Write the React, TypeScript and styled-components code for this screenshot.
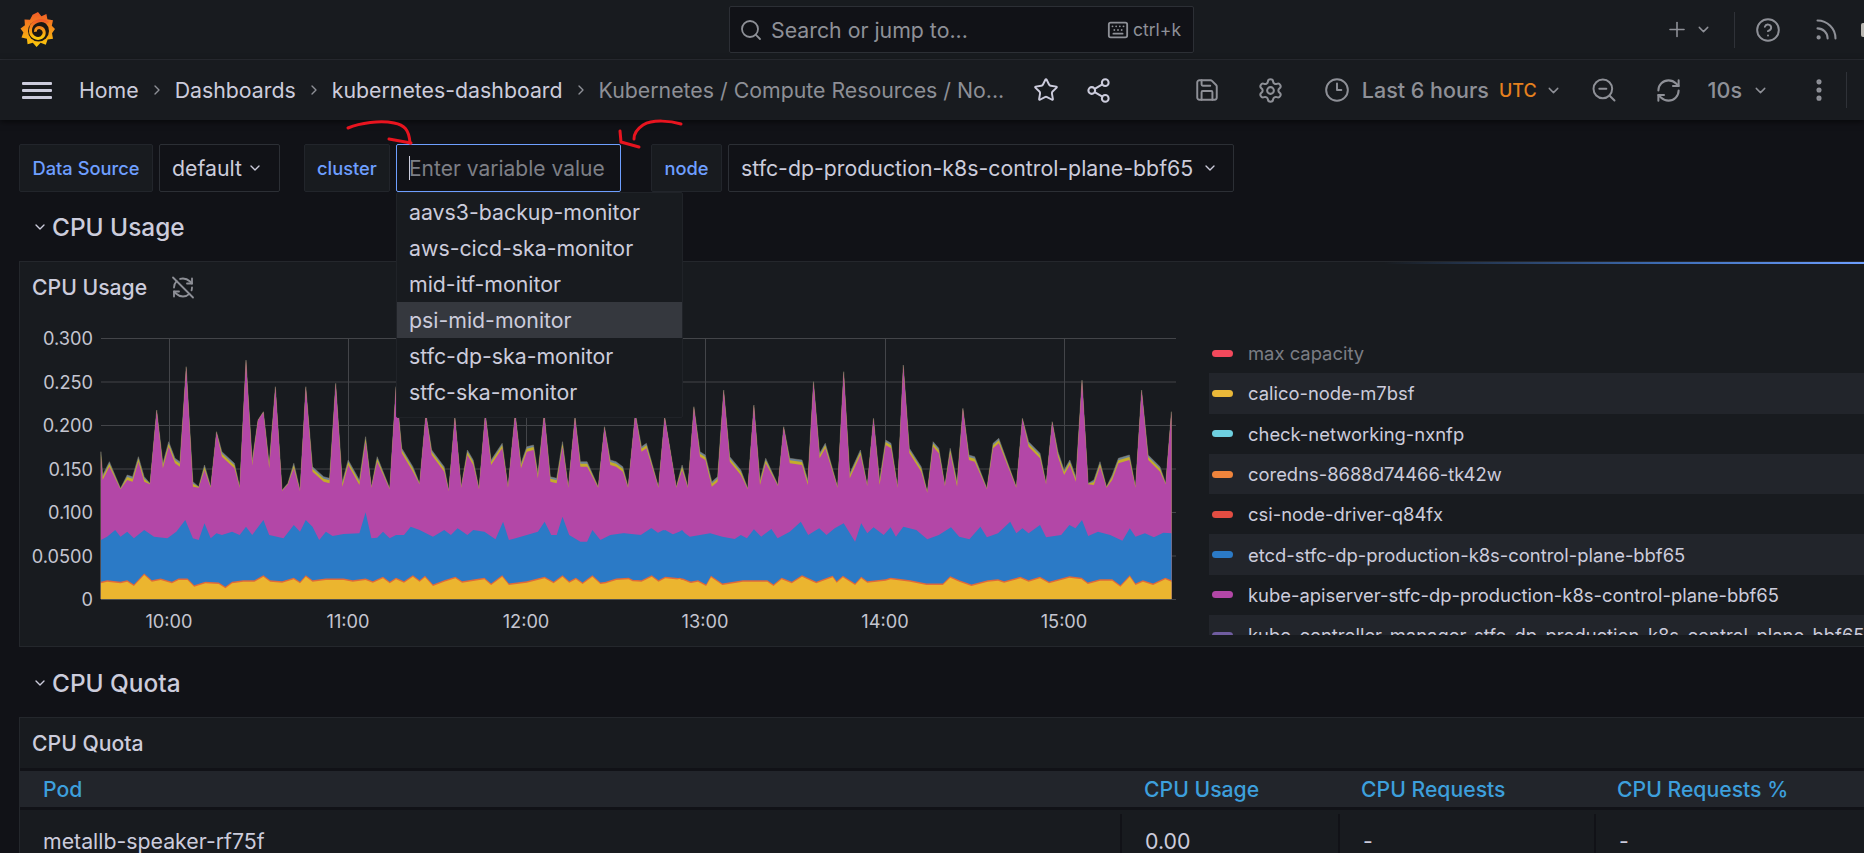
import React from 'react';
import styled, { createGlobalStyle } from 'styled-components';
import {
  ChevronDown,
  ChevronRight,
  CircleHelp,
  Clock3,
  EllipsisVertical,
  Keyboard,
  Plus,
  RefreshCw,
  RefreshCwOff,
  Rss,
  Save,
  Search,
  Settings,
  Share2,
  Star,
  ZoomOut,
} from 'lucide-react';

const colors = {
  canvas: '#111217',
  panel: '#181b1f',
  raised: '#22252b',
  border: '#2a2d33',
  text: '#ccccdc',
  dim: '#8e9097',
  blue: '#6e9fff',
  link: '#3d9fdc',
};

const GlobalStyle = createGlobalStyle`
  html, body {
    margin: 0;
    padding: 0;
    height: 100%;
    overflow: hidden;
    background: ${colors.canvas};
  }
  body, input {
    font-family: Inter, "Noto Sans", sans-serif;
    color: ${colors.text};
  }
`;

const Page = styled.div`
  position: relative;
  width: 1864px;
  height: 853px;
  overflow: hidden;
  background: ${colors.canvas};
`;

const TopBar = styled.header`
  position: relative;
  display: flex;
  align-items: center;
  height: 60px;
  box-sizing: border-box;
  padding-left: 20px;
  background: ${colors.panel};
  border-bottom: 1px solid #2a2d33;
`;

const SearchBox = styled.div`
  position: absolute;
  left: 729px;
  top: 6px;
  display: flex;
  align-items: center;
  width: 465px;
  height: 47px;
  box-sizing: border-box;
  padding: 0 12px 0 9px;
  background: ${colors.canvas};
  border: 1px solid #2c2f35;
  border-radius: 2px;
  color: ${colors.dim};
  font-size: 21.3px;
`;

const SearchText = styled.span`
  margin-left: 8px;
  flex: 1;
`;

const Shortcut = styled.span`
  margin-left: 4px;
  font-size: 17.5px;
`;

const RightGroup = styled.div`
  display: flex;
  align-items: center;
  margin-left: auto;
  color: ${colors.dim};
`;

const IconSlot = styled.span<{ $w: number; $color?: string; $left?: number }>`
  display: inline-flex;
  align-items: center;
  justify-content: center;
  flex: none;
  width: ${({ $w }) => $w}px;
  margin-left: ${({ $left }) => $left || 0}px;
  color: ${({ $color }) => $color || 'inherit'};
`;

const Divider = styled.span`
  flex: none;
  width: 1px;
  height: 36px;
  background: #2f3238;
`;

const AvatarEdge = styled.span`
  flex: none;
  width: 3px;
  height: 14px;
  margin-left: 10px;
  border-radius: 2px 0 0 2px;
  background: #b9b7b2;
`;

const SubBar = styled.nav`
  position: relative;
  z-index: 2;
  display: flex;
  align-items: center;
  height: 60px;
  box-sizing: border-box;
  padding-left: 22px;
  background: ${colors.panel};
  box-shadow: 0 2px 6px rgba(0, 0, 0, 0.55);
`;

const Burger = styled.div`
  display: flex;
  flex-direction: column;
  justify-content: space-between;
  width: 30px;
  height: 17px;
  margin-right: 27px;
  span {
    height: 3px;
    border-radius: 1px;
    background: ${colors.text};
  }
`;

const Crumb = styled.span<{ $last?: boolean }>`
  font-size: 21.3px;
  white-space: nowrap;
  color: ${({ $last }) => ($last ? '#8d8f96' : colors.text)};
`;

const CrumbSep = styled(IconSlot)`
  color: ${colors.dim};
`;

const TimeText = styled.span<{ $left?: number }>`
  margin-left: ${({ $left }) => $left || 0}px;
  font-size: 21.5px;
  font-weight: 500;
  white-space: nowrap;
`;

const Utc = styled.span`
  margin-left: 10px;
  font-size: 18px;
  font-weight: 500;
  color: #e6811e;
`;

const Content = styled.main`
  padding-left: 19px;
`;

const VarRow = styled.div`
  display: flex;
  height: 48px;
  margin-top: 24px;
`;

const VarLabel = styled.div<{ $w: number; $left?: number }>`
  display: flex;
  align-items: center;
  justify-content: center;
  width: ${({ $w }) => $w}px;
  margin-left: ${({ $left }) => $left || 0}px;
  box-sizing: border-box;
  background: ${colors.panel};
  border: 1px solid #22252b;
  border-radius: 2px;
  color: ${colors.blue};
  font-size: 18.3px;
  font-weight: 500;
`;

const VarValue = styled.div<{ $w: number }>`
  display: flex;
  align-items: center;
  width: ${({ $w }) => $w}px;
  margin-left: 6px;
  padding-left: 12px;
  box-sizing: border-box;
  background: ${colors.canvas};
  border: 1px solid #2c2f35;
  border-radius: 2px;
  font-size: 21.3px;
  white-space: nowrap;
`;

const VarInputWrap = styled.div`
  position: relative;
  width: 225px;
  margin-left: 6px;
`;

const VarInput = styled.input`
  width: 100%;
  height: 48px;
  box-sizing: border-box;
  padding: 0 0 0 12px;
  background: ${colors.canvas};
  border: 1px solid ${colors.blue};
  border-radius: 2px;
  outline: none;
  font-size: 21px;
  &::placeholder {
    color: #7d7f86;
    opacity: 1;
  }
`;

const Caret = styled.span`
  position: absolute;
  left: 13px;
  top: 12px;
  width: 1px;
  height: 24px;
  background: ${colors.text};
`;

const Dropdown = styled.ul`
  position: absolute;
  z-index: 5;
  left: 0;
  top: 48px;
  width: 287px;
  margin: 0;
  padding: 1px 0 7px;
  box-sizing: border-box;
  list-style: none;
  background: ${colors.panel};
  border: 1px solid #202328;
  border-radius: 2px;
`;

const DropdownItem = styled.li<{ $active?: boolean }>`
  display: flex;
  align-items: center;
  height: 36px;
  padding-left: 12px;
  font-size: 21.3px;
  background: ${({ $active }) => ($active ? '#35383e' : 'transparent')};
`;

const SectionRow = styled.div<{ $top: number }>`
  display: flex;
  align-items: center;
  height: 38px;
  margin-top: ${({ $top }) => $top}px;
`;

const SectionChevron = styled(IconSlot)`
  margin-left: 13px;
  margin-right: 4px;
`;

const SectionTitle = styled.h2`
  margin: 0;
  font-size: 24.4px;
  font-weight: 500;
`;

const Panel = styled.section<{ $h?: number }>`
  position: relative;
  height: ${({ $h }) => ($h ? `${$h}px` : 'auto')};
  margin-top: 15px;
  box-sizing: border-box;
  background: ${colors.panel};
  border: 1px solid #24272c;
  border-right: none;
`;

const LoadingBar = styled.div`
  position: absolute;
  top: 0;
  right: 0;
  width: 480px;
  height: 2px;
  background: linear-gradient(90deg, transparent, #3f6fb8 60%, ${colors.blue});
`;

const PanelHeader = styled.div`
  display: flex;
  align-items: center;
  height: 50px;
  padding-left: 12px;
  font-size: 21.2px;
  font-weight: 500;
`;

const SyncOff = styled(IconSlot)`
  margin-left: 24px;
  color: ${colors.dim};
`;

const PanelBody = styled.div`
  display: flex;
  align-items: flex-start;
  height: 325px;
`;

const Chart = styled.svg`
  flex: none;
  display: block;
  width: 1180px;
  height: 320px;
  margin-top: 8px;
  margin-left: -1px;
`;

const AxisText = styled.text`
  font-family: Inter, sans-serif;
  font-size: 18.2px;
  fill: #c4c5d0;
`;

const Legend = styled.div`
  flex: 1;
  height: 302px;
  margin-top: 21px;
  margin-left: 10px;
  overflow: hidden;
`;

const LegendRow = styled.div<{ $shaded: boolean }>`
  display: flex;
  align-items: center;
  height: 40.3px;
  padding-left: 3px;
  background: ${({ $shaded }) => ($shaded ? colors.raised : 'transparent')};
  font-size: 18.4px;
  white-space: nowrap;
`;

const Swatch = styled.span<{ $color: string }>`
  flex: none;
  width: 21px;
  height: 7px;
  margin-right: 15px;
  border-radius: 4px;
  background: ${({ $color }) => $color};
`;

const LegendLabel = styled.span<{ $dim?: boolean }>`
  color: ${({ $dim }) => ($dim ? '#7b7d84' : colors.text)};
`;

const TableRow = styled.div`
  display: grid;
  grid-template-columns: 1100px 218px 256px 1fr;
`;

const HeadRow = styled(TableRow)`
  height: 36px;
  align-items: center;
  margin-top: 3px;
  background: ${colors.raised};
  border-bottom: 3px solid ${colors.canvas};
  box-shadow: 0 -3px 0 ${colors.canvas};
`;

const HeadCell = styled.div<{ $pad: number }>`
  padding-left: ${({ $pad }) => $pad}px;
  color: ${colors.link};
  font-size: 21.2px;
  font-weight: 500;
  white-space: nowrap;
`;

const BodyCell = styled.div<{ $first?: boolean }>`
  display: flex;
  align-items: center;
  height: 54px;
  margin-top: 4px;
  padding-left: 23px;
  box-sizing: border-box;
  font-size: 21.3px;
  border-left: ${({ $first }) => ($first ? 'none' : `2px solid ${colors.canvas}`)};
`;

const Annotation = styled.svg`
  position: absolute;
  z-index: 3;
  left: 340px;
  top: 116px;
  width: 350px;
  height: 36px;
`;

const baseline = 599;

// traced outlines: [x, y] in the crop coordinates they were read from
const fromLeft = (p: number[][]) => p.map(([x, y]) => [x / 2.24, y / 3 + 260]);
const fromRight = (p: number[][]) => p.map(([x, y]) => [600 + x / 2.45, y / 3 + 300]);

const topLine = [
  ...fromLeft([[226,575],[230,645],[245,605],[270,685],[285,645],[297,650],[310,590],[323,650],[336,670],[351,450],[365,610],[378,545],[392,595],[403,605],[417,320],[432,665],[445,680],[458,615],[472,680],[485,515],[497,575],[525,610],[537,680],[551,300],[565,600],[578,480],[590,455],[603,610],[617,380],[632,690],[645,670],[658,610],[672,690],[685,380],[700,620],[725,650],[738,655],[752,370],[767,665],[780,600],[805,660],[819,530],[832,680],[845,590],[873,685],[887,380],[900,565],[925,620],[940,670],[954,460],[967,570],[995,620],[1005,690],[1019,470],[1033,680],[1047,570],[1060,600],[1073,685],[1087,460],[1100,600],[1125,550],[1138,680],[1154,460],[1167,610],[1180,560],[1195,555],[1205,640],[1219,460],[1233,650],[1247,655],[1260,545],[1273,680],[1288,470],[1300,605],[1315,605],[1340,680],[1354,500],[1367,600],[1380,605],[1395,620],[1407,680],[1423,460],[1437,560],[1448,550],[1475,680],[1489,470],[1515,680],[1528,615],[1541,680]]),
  ...fromRight([[230,320],[245,455],[258,465],[274,545],[288,530],[303,270],[318,470],[345,510],[362,565],[377,315],[392,540],[406,475],[436,555],[450,380],[465,475],[495,480],[509,540],[523,245],[538,460],[552,430],[582,560],[597,215],[612,520],[638,450],[655,555],[670,355],[685,540],[700,420],[713,430],[729,560],[743,195],[758,445],[787,500],[802,575],[816,425],[830,445],[845,555],[858,445],[875,545],[889,325],[904,465],[918,470],[948,565],[963,430],[977,415],[1020,560],[1035,355],[1050,425],[1078,460],[1093,550],[1108,365],[1122,455],[1137,510],[1151,480],[1166,530],[1181,240],[1196,550],[1210,540],[1225,485],[1241,560],[1255,525],[1270,475],[1297,465],[1312,560],[1327,270],[1343,465],[1372,500],[1386,550],[1400,335]]),
];

const blueLine = [
  ...fromLeft([[226,840],[240,830],[258,810],[270,830],[285,815],[300,835],[323,810],[345,830],[375,835],[395,815],[415,780],[432,835],[445,840],[458,790],[472,835],[485,820],[497,825],[520,815],[537,825],[551,800],[565,825],[590,780],[603,825],[635,835],[658,795],[672,815],[685,780],[700,800],[715,840],[730,815],[745,828],[770,822],[805,820],[819,757],[832,835],[845,833],[858,815],[873,835],[887,825],[905,825],[920,800],[940,810],[970,830],[995,810],[1010,825],[1025,805],[1047,825],[1060,810],[1085,815],[1110,838],[1127,785],[1140,840],[1155,835],[1180,825],[1205,815],[1220,785],[1235,825],[1247,825],[1260,770],[1275,825],[1300,845],[1315,845],[1327,810],[1345,840],[1367,825],[1395,820],[1437,825],[1460,805],[1475,820],[1490,810],[1510,825],[1528,810],[1541,830]]),
  ...fromRight([[0,720],[30,705],[60,700],[100,705],[125,685],[140,700],[155,690],[175,705],[200,692],[220,710],[270,700],[300,710],[330,717],[345,705],[360,715],[377,688],[395,710],[420,687],[435,715],[465,695],[492,665],[510,705],[537,685],[555,705],[575,685],[597,670],[625,725],[640,670],[655,700],[670,682],[695,705],[712,682],[725,710],[743,680],[775,690],[802,718],[830,705],[860,682],[880,710],[905,718],[932,680],[948,712],[975,700],[1005,665],[1020,700],[1035,685],[1050,700],[1078,675],[1093,712],[1130,705],[1150,675],[1165,685],[1181,660],[1196,708],[1220,695],[1250,705],[1280,722],[1298,685],[1312,710],[1335,700],[1357,712],[1380,698],[1400,700]]),
];

const yellowLine = [
  ...fromLeft([[226,970],[240,965],[270,970],[285,965],[300,978],[323,945],[340,965],[360,960],[385,970],[400,960],[420,960],[435,980],[460,970],[490,972],[505,985],[520,970],[545,965],[570,965],[590,950],[605,965],[632,968],[658,958],[672,970],[685,950],[700,965],[730,960],[770,960],[790,965],[819,960],[835,968],[858,955],[873,970],[887,958],[905,968],[925,950],[940,965],[952,952],[970,978],[995,965],[1020,955],[1035,968],[1060,963],[1085,958],[1100,975],[1125,950],[1140,975],[1180,968],[1220,955],[1240,970],[1260,950],[1275,968],[1290,958],[1305,972],[1327,950],[1345,972],[1400,962],[1437,965],[1460,950],[1475,965],[1490,955],[1530,960],[1548,970]]),
  ...fromRight([[0,855],[40,840],[70,838],[90,850],[110,850],[127,830],[145,848],[158,838],[175,845],[195,838],[220,850],[240,845],[260,858],[272,832],[300,855],[350,845],[410,845],[425,858],[445,838],[470,850],[495,830],[530,850],[570,832],[580,848],[595,832],[625,855],[640,835],[655,848],[700,842],[712,838],[760,845],[800,855],[840,855],[858,833],[880,845],[910,858],[950,845],[975,842],[990,848],[1030,835],[1050,845],[1078,835],[1100,850],[1150,833],[1180,838],[1195,852],[1225,842],[1255,842],[1275,860],[1298,830],[1312,855],[1330,845],[1355,855],[1385,838],[1400,845]]),
];

// small series sit on the magenta: thick on the plateaus, hairline on the spikes
const stackOffset = (y: number, share: number) => {
  const full = y < 432 ? 0.5 : y > 483 ? 1 : 5;
  return full * share;
};

const area = (line: number[][], shift: (y: number) => number = () => 0) => {
  const pts = line.map(([x, y]) => `${x.toFixed(1)},${(y + shift(y)).toFixed(1)}`);
  const left = line[0][0].toFixed(1);
  const right = line[line.length - 1][0].toFixed(1);
  return `${left},${baseline} ${pts.join(' ')} ${right},${baseline}`;
};

const yTicks = [
  ['0.300', 338],
  ['0.250', 381.5],
  ['0.200', 425],
  ['0.150', 468.5],
  ['0.100', 512],
  ['0.0500', 555.5],
  ['0', 599],
] as const;

const xTicks = [
  ['10:00', 169],
  ['11:00', 348],
  ['12:00', 526],
  ['13:00', 705],
  ['14:00', 885],
  ['15:00', 1064],
] as const;

const CpuChart = () => (
  <Chart viewBox="19 320 1180 320">
    {yTicks.map(([label, y]) => (
      <g key={label}>
        <line x1={101} x2={1176} y1={y + 0.5} y2={y + 0.5} stroke="#434549" />
        <AxisText x={93} y={y + 7} textAnchor="end">
          {label}
        </AxisText>
      </g>
    ))}
    {xTicks.map(([label, x]) => (
      <g key={label}>
        <line x1={x + 0.5} x2={x + 0.5} y1={338} y2={599} stroke="#434549" />
        <AxisText x={x} y={628} textAnchor="middle">
          {label}
        </AxisText>
      </g>
    ))}
    <polygon points={area(topLine)} fill="#6c8398" stroke="#857f6c" strokeOpacity={0.7} strokeWidth={0.7} />
    <polygon points={area(topLine, (y) => stackOffset(y, 0.4))} fill="#c4ad2a" />
    <polygon points={area(topLine, (y) => stackOffset(y, 1))} fill="#b347a7" />
    <polygon points={area(blueLine)} fill="#2b7ac6" />
    <polygon points={area(yellowLine, () => -1.5)} fill="#e0693a" />
    <polygon points={area(yellowLine)} fill="#ebb52f" />
  </Chart>
);

const Logo = () => (
  <svg width="36" height="38" viewBox="0 0 36 38">
    <defs>
      <linearGradient id="grafanaSun" x1="0.5" y1="0" x2="0.5" y2="1">
        <stop offset="0" stopColor="#f05a28" />
        <stop offset="1" stopColor="#fbca0a" />
      </linearGradient>
    </defs>
    <path
      fill="url(#grafanaSun)"
      d="M18 1l3.4 4.2 5-2.2 1 5.3 5.6 1-1.2 5.4L35 18l-3 4.300 1 5.500-5.400.7-1.800 5.300-5.200-2L16.600 36l-3.800-4.200-5.200 1.400-.7-5.400L1.500 26.500l1.900-5L.5 17.400l4.400-3.200-.4-5.600 5.500.2L12.600 3.800z"
    />
    <circle cx="18.500" cy="20" r="10.500" fill="#1b1713" />
    <path
      fill="none"
      stroke="url(#grafanaSun)"
      strokeWidth="3"
      d="M28 12C22 7 11 10 10.500 19c-.4 7 6.500 10 11 7.500 4-2.300 3.500-8.500-1-9.800-3-.8-5.500 1.300-5 4"
    />
  </svg>
);

const legendItems = [
  ['max capacity', '#f2495c'],
  ['calico-node-m7bsf', '#eab839'],
  ['check-networking-nxnfp', '#6ed0e0'],
  ['coredns-8688d74466-tk42w', '#ef843c'],
  ['csi-node-driver-q84fx', '#e24d42'],
  ['etcd-stfc-dp-production-k8s-control-plane-bbf65', '#2b7ac6'],
  ['kube-apiserver-stfc-dp-production-k8s-control-plane-bbf65', '#b347a7'],
  ['kube-controller-manager-stfc-dp-production-k8s-control-plane-bbf65', '#705da0'],
];

const clusters = [
  'aavs3-backup-monitor',
  'aws-cicd-ska-monitor',
  'mid-itf-monitor',
  'psi-mid-monitor',
  'stfc-dp-ska-monitor',
  'stfc-ska-monitor',
];

const crumbs = ['Home', 'Dashboards', 'kubernetes-dashboard'];

const App = () => (
  <Page>
    <GlobalStyle />
    <TopBar>
      <Logo />
      <SearchBox>
        <Search size={24} strokeWidth={1.8} />
        <SearchText>Search or jump to...</SearchText>
        <Keyboard size={22} />
        <Shortcut>ctrl+k</Shortcut>
      </SearchBox>
      <RightGroup>
        <IconSlot $w={24}>
          <Plus size={27} strokeWidth={1.6} />
        </IconSlot>
        <IconSlot $w={20} $left={4}>
          <ChevronDown size={17} />
        </IconSlot>
        <IconSlot $w={21} />
        <Divider />
        <IconSlot $w={66}>
          <CircleHelp size={26} strokeWidth={1.8} />
        </IconSlot>
        <IconSlot $w={50}>
          <Rss size={27} strokeWidth={1.8} />
        </IconSlot>
        <AvatarEdge />
      </RightGroup>
    </TopBar>
    <SubBar>
      <Burger>
        <span />
        <span />
        <span />
      </Burger>
      {crumbs.map((c) => (
        <React.Fragment key={c}>
          <Crumb>{c}</Crumb>
          <CrumbSep $w={36}>
            <ChevronRight size={16} />
          </CrumbSep>
        </React.Fragment>
      ))}
      <Crumb $last>Kubernetes / Compute Resources / No...</Crumb>
      <IconSlot $w={62} $color={colors.text} $left={11}>
        <Star size={26} strokeWidth={1.8} />
      </IconSlot>
      <IconSlot $w={42} $color={colors.text}>
        <Share2 size={27} strokeWidth={1.8} />
      </IconSlot>
      <RightGroup>
        <IconSlot $w={32}>
          <Save size={26} strokeWidth={1.8} />
        </IconSlot>
        <IconSlot $w={96}>
          <Settings size={27} strokeWidth={1.8} />
        </IconSlot>
        <IconSlot $w={36}>
          <Clock3 size={26} strokeWidth={1.8} />
        </IconSlot>
        <TimeText $left={7}>Last 6 hours</TimeText>
        <Utc>UTC</Utc>
        <IconSlot $w={33}>
          <ChevronDown size={17} />
        </IconSlot>
        <IconSlot $w={68}>
          <ZoomOut size={28} strokeWidth={1.7} />
        </IconSlot>
        <IconSlot $w={62}>
          <RefreshCw size={27} strokeWidth={1.8} />
        </IconSlot>
        <TimeText $left={8}>10s</TimeText>
        <IconSlot $w={36}>
          <ChevronDown size={17} />
        </IconSlot>
        <IconSlot $w={38} $left={22}>
          <EllipsisVertical size={28} strokeWidth={2.4} />
        </IconSlot>
        <IconSlot $w={8} />
        <Divider />
        <IconSlot $w={17} />
      </RightGroup>
    </SubBar>
    <Content>
      <VarRow>
        <VarLabel $w={134}>Data Source</VarLabel>
        <VarValue $w={121}>
          default
          <IconSlot $w={26}>
            <ChevronDown size={16} />
          </IconSlot>
        </VarValue>
        <VarLabel $w={86} $left={24}>
          cluster
        </VarLabel>
        <VarInputWrap>
          <VarInput placeholder="Enter variable value" readOnly />
          <Caret />
          <Dropdown>
            {clusters.map((c) => (
              <DropdownItem key={c} $active={c === 'psi-mid-monitor'}>
                {c}
              </DropdownItem>
            ))}
          </Dropdown>
        </VarInputWrap>
        <VarLabel $w={71} $left={30}>
          node
        </VarLabel>
        <VarValue $w={506}>
          stfc-dp-production-k8s-control-plane-bbf65
          <IconSlot $w={34}>
            <ChevronDown size={16} />
          </IconSlot>
        </VarValue>
      </VarRow>
      <SectionRow $top={16}>
        <SectionChevron $w={16}>
          <ChevronDown size={16} />
        </SectionChevron>
        <SectionTitle>CPU Usage</SectionTitle>
      </SectionRow>
      <Panel $h={386}>
        <LoadingBar />
        <PanelHeader>
          CPU Usage
          <SyncOff $w={24}>
            <RefreshCwOff size={25} strokeWidth={1.8} />
          </SyncOff>
        </PanelHeader>
        <PanelBody>
          <CpuChart />
          <Legend>
            {legendItems.map(([name, color], i) => (
              <LegendRow key={name} $shaded={i % 2 === 1}>
                <Swatch $color={color} />
                <LegendLabel $dim={i === 0}>{name}</LegendLabel>
              </LegendRow>
            ))}
          </Legend>
        </PanelBody>
      </Panel>
      <SectionRow $top={17}>
        <SectionChevron $w={16}>
          <ChevronDown size={16} />
        </SectionChevron>
        <SectionTitle>CPU Quota</SectionTitle>
      </SectionRow>
      <Panel>
        <PanelHeader>CPU Quota</PanelHeader>
        <HeadRow>
          <HeadCell $pad={23}>Pod</HeadCell>
          <HeadCell $pad={24}>CPU Usage</HeadCell>
          <HeadCell $pad={23}>CPU Requests</HeadCell>
          <HeadCell $pad={23}>CPU Requests %</HeadCell>
        </HeadRow>
        <TableRow>
          <BodyCell $first>metallb-speaker-rf75f</BodyCell>
          <BodyCell>0.00</BodyCell>
          <BodyCell>-</BodyCell>
          <BodyCell>-</BodyCell>
        </TableRow>
      </Panel>
    </Content>
    <Annotation viewBox="340 116 350 36" fill="none" stroke="#e8141f" strokeWidth={3} strokeLinecap="round">
      <path d="M348 128c12-5 32-8 46-5 10 2 15 6 16 20" />
      <path d="M389 139l22 4" />
      <path d="M681 124c-10-3-28-5-38 1-6 4-9 8-9 14" />
      <path d="M620 131l1 11 18 5" />
    </Annotation>
  </Page>
);

export default App;
